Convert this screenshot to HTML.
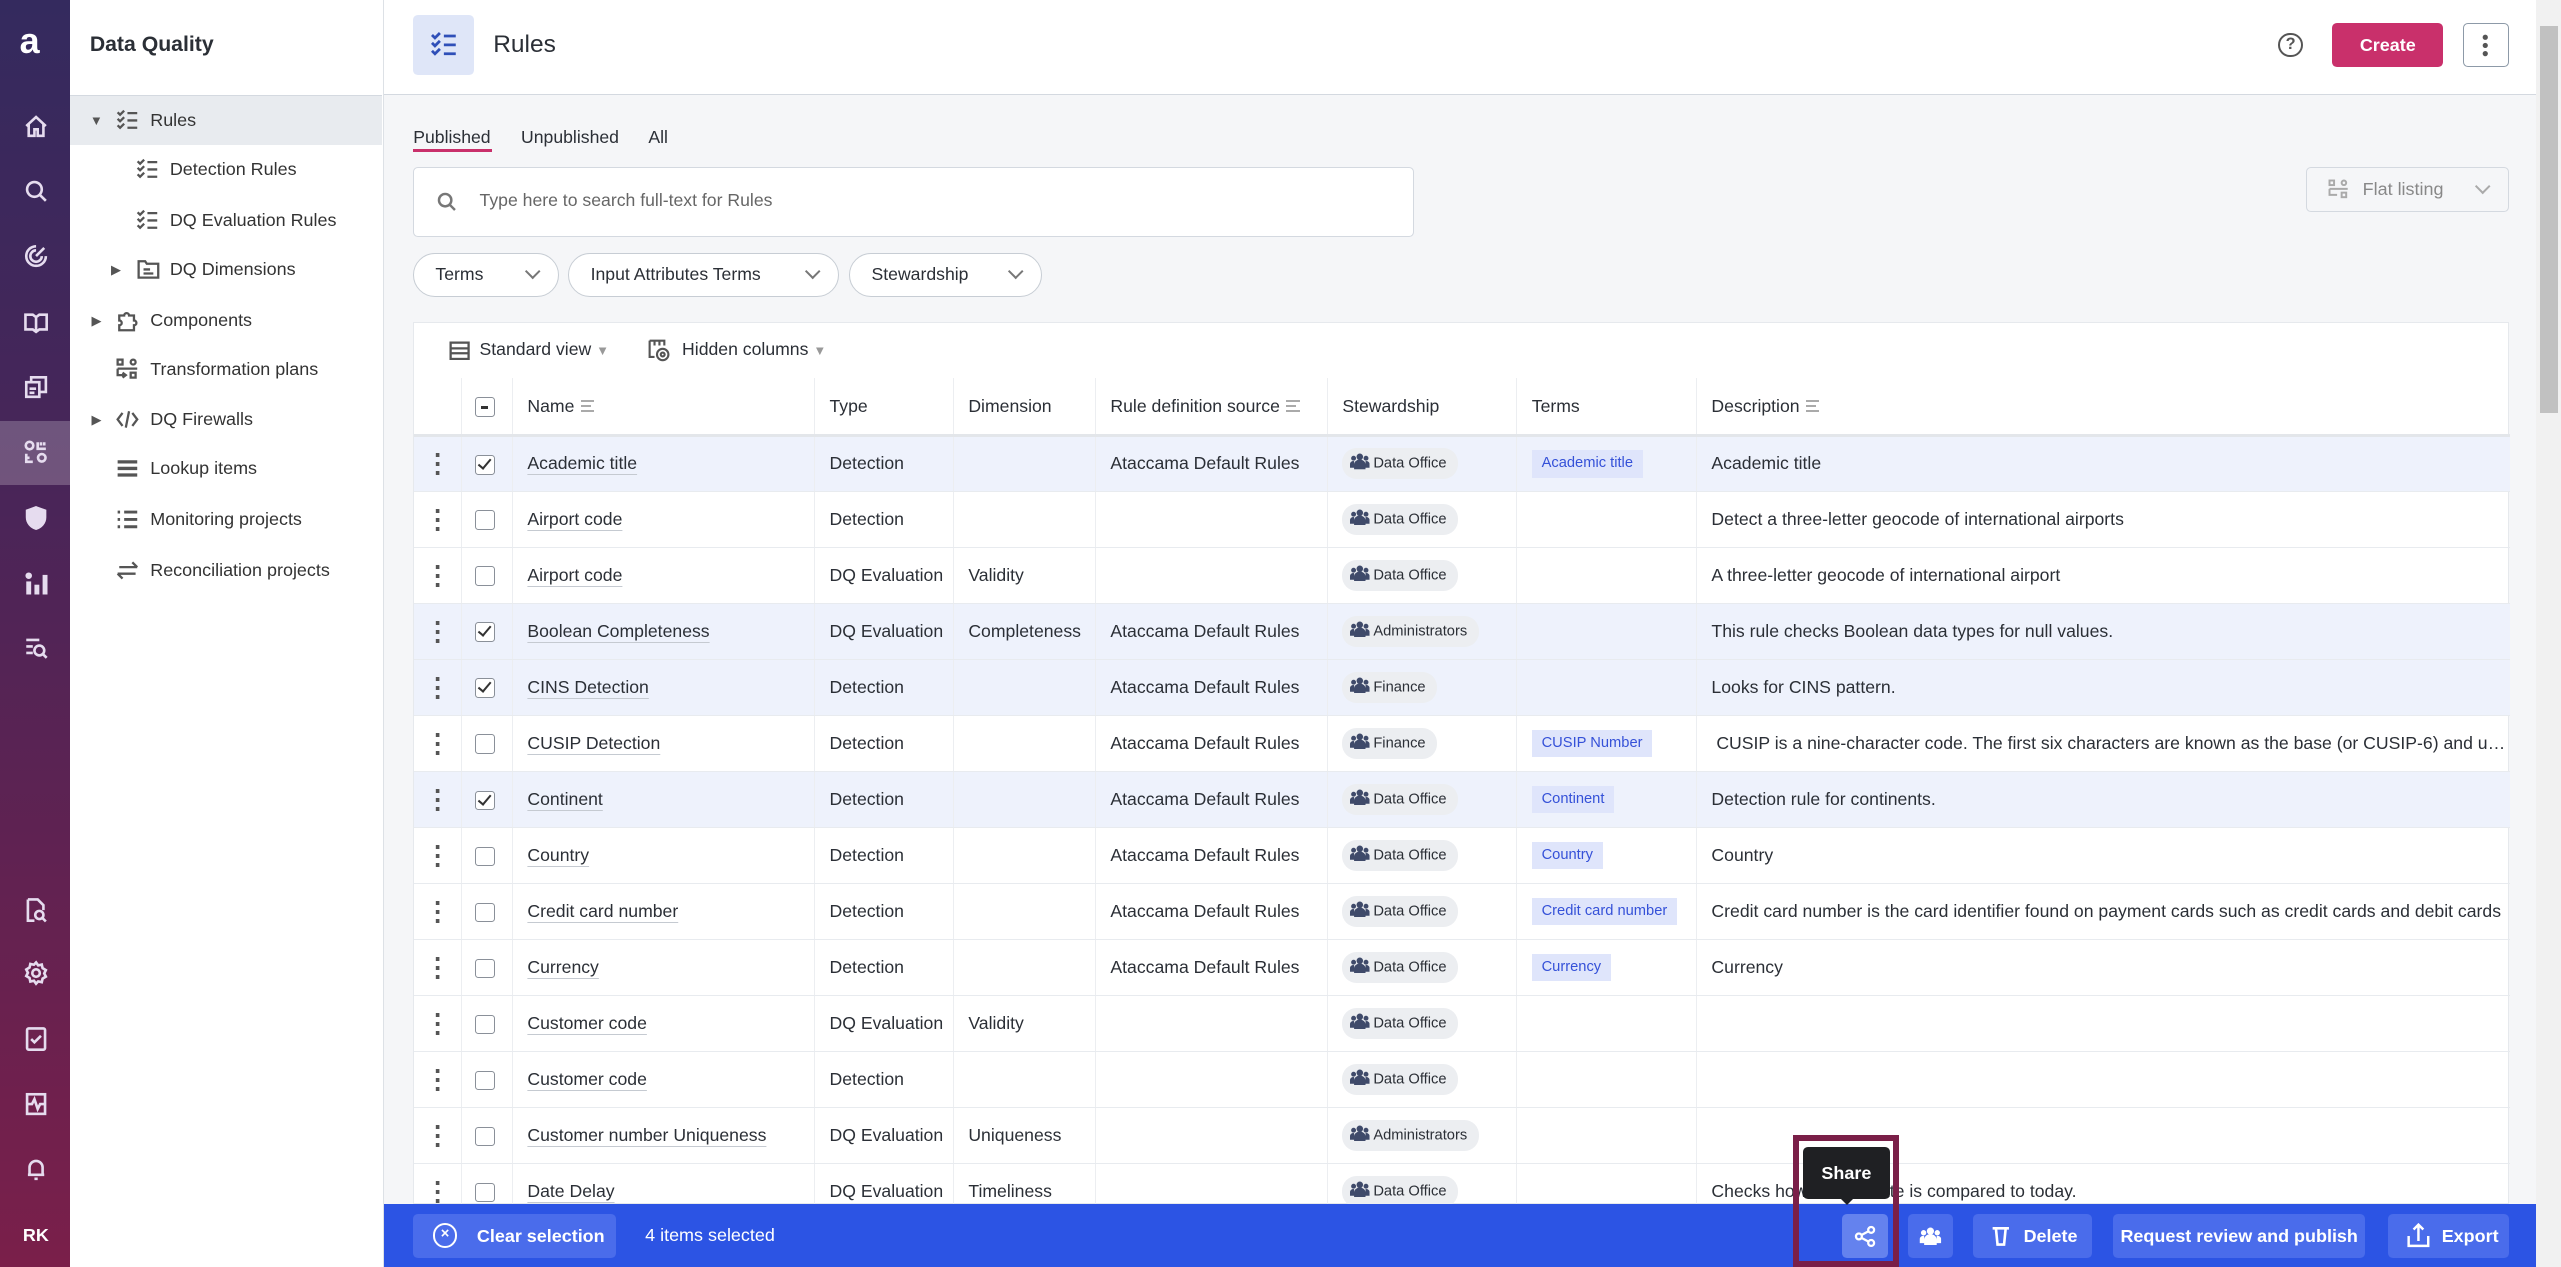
<!DOCTYPE html>
<html><head><meta charset="utf-8"><style>
*{box-sizing:border-box;margin:0;padding:0}
html,body{width:2561px;height:1267px;overflow:hidden;background:#f5f6f8}
#w{zoom:1.63325;width:1568px;height:776px;position:relative;font-family:"Liberation Sans",sans-serif;color:#2b2f36;font-size:10.8px}
.a{position:absolute;white-space:nowrap}
.rail{left:0;top:0;width:43px;height:776px;background:linear-gradient(#342a5e,#4a2558 40%,#7a1f4a)}
.rail svg{position:absolute;left:14px;width:16px;height:16px;fill:none;stroke:#e6dcef;stroke-width:1.6}
.side{left:43px;top:0;width:192px;height:776px;background:#fff;border-right:1px solid #dde1e6}
.nav{position:absolute;left:0;width:191px;height:30px;line-height:30px;font-size:11px;color:#333}
.nav svg{position:absolute;top:8px;width:14px;height:14px;fill:none;stroke:#555;stroke-width:1.4}
.tri{position:absolute;top:0;font-size:8px;color:#555}
.hdr{left:235px;top:0;width:1318px;height:58px;background:#fff;border-bottom:1px solid #d4d9e0}
.chip{position:absolute;top:155px;height:27px;border:1px solid #c7cdd4;border-radius:14px;background:#fff;line-height:25px;padding-left:13px;font-size:10.8px}
.chip i{position:absolute;right:12px;top:7px;width:7px;height:7px;border-right:1.4px solid #777;border-bottom:1.4px solid #777;transform:rotate(45deg)}
.card{left:253px;top:197px;width:1283px;height:540px;background:#fff;border:1px solid #e6e9ed}
table{position:absolute;left:0;top:34px;border-collapse:collapse;table-layout:fixed;width:1283px}
td,th{height:34.3px;border-bottom:1px solid #e8ebef;border-left:1px solid #eceef1;padding-left:9px;text-align:left;white-space:nowrap;overflow:hidden;text-overflow:ellipsis;font-size:10.8px;font-weight:normal}
th{border-bottom:2px solid #e3e6ea;height:35px}
td:first-child,th:first-child{border-left:none}
tr.s td{background:#eef2fc}
.k{padding-left:0;text-align:center;font-weight:bold;font-size:16px;color:#555}
.cb{display:inline-block;width:12px;height:12px;border:1px solid #8a9099;border-radius:2px;vertical-align:middle;position:relative;background:#fff}
.cb.c::after{content:"";position:absolute;left:3px;top:0px;width:3px;height:7px;border-right:1.3px solid #333;border-bottom:1.3px solid #333;transform:rotate(40deg)}
.cb.m::after{content:"";position:absolute;left:3px;top:5px;width:4px;height:1.5px;background:#333}
.n{text-decoration:underline;text-decoration-color:#c5cad1;text-underline-offset:3px}
.st{display:inline-block;background:#eceef1;border-radius:9px;padding:3px 7px 3px 5px;font-size:9px;line-height:12px}
.st svg{width:12px;height:10px;vertical-align:-1px;margin-right:2px;fill:#3f4a6a}
.tm{display:inline-block;background:#dfe5fb;color:#3551d8;font-size:9px;padding:3px 6px;line-height:11px}
.bar{left:235px;top:737px;width:1318px;height:39px;background:#2c54e4}
.bb{position:absolute;top:6px;height:27px;background:#4a6ceb;border-radius:3px;color:#fff;font-weight:bold;font-size:11px;line-height:27px;white-space:nowrap}
.srt{display:inline-block;width:8px;height:7px;margin-left:4px;border-top:1.5px solid #aaa;border-bottom:1.5px solid #aaa;position:relative;vertical-align:0}
.srt::after{content:"";position:absolute;left:0;top:1.5px;width:6px;border-top:1.5px solid #aaa}
</style></head><body><div id="w">
<svg width="0" height="0" style="position:absolute"><defs><symbol id="pp" viewBox="0 0 12 10"><circle cx="6" cy="2.3" r="2"/><circle cx="2.2" cy="3.2" r="1.5"/><circle cx="9.8" cy="3.2" r="1.5"/><path d="M2.5 10V7a3.5 3 0 0 1 7 0v3zM0 9V6.5a2 2 0 0 1 2.5-1.5V9zM12 9V6.5a2 2 0 0 0-2.5-1.5V9z"/></symbol></defs></svg>
<div class="a rail">
<div class="a" style="left:12px;top:14px;color:#fff;font-weight:bold;font-size:22px;line-height:22px">a</div>
<svg style="top:69px" viewBox="0 0 16 16"><path d="M2 8L8 2.5 14 8M3.5 7v7h3.5v-4h2v4h3.5V7"/></svg>
<svg style="top:109px" viewBox="0 0 16 16"><circle cx="7" cy="7" r="4.5"/><path d="M10.5 10.5L14 14"/></svg>
<svg style="top:149px" viewBox="0 0 16 16"><path d="M14 8A6 6 0 1 1 8 2M11.5 8A3.5 3.5 0 1 1 8 4.5M8 8l5-5"/></svg>
<svg style="top:189px" viewBox="0 0 16 16"><path d="M1.5 3.5h4.5L8 5l2-1.5h4.5v9H10L8 14l-2-1.5H1.5zM8 5v9"/></svg>
<svg style="top:229px" viewBox="0 0 16 16"><path d="M2 5h8v9H2zM5 5V2h9v9h-4M4 9h4M4 11.5h3"/></svg>
<div class="a" style="left:0;top:258px;width:43px;height:39px;background:rgba(255,255,255,.22)"></div>
<svg style="top:269px" viewBox="0 0 16 16"><circle cx="4" cy="4" r="2.3"/><circle cx="11.5" cy="11.5" r="2.3"/><path d="M9 2v4h5M11 2v2M13 2v2M2 9v5h4M2 11.5h2"/></svg>
<svg style="top:309px;fill:#e6dcef" viewBox="0 0 16 16"><path d="M8 1.5l5.5 2v4c0 3.5-2.5 6-5.5 7-3-1-5.5-3.5-5.5-7v-4z"/></svg>
<svg style="top:349px;fill:#e6dcef;stroke:none" viewBox="0 0 16 16"><circle cx="3.5" cy="3.5" r="2"/><rect x="2" y="7" width="3" height="8"/><rect x="7" y="9" width="3" height="6"/><rect x="12" y="3" width="3" height="12"/></svg>
<svg style="top:389px" viewBox="0 0 16 16"><path d="M2 3h8M2 7h4M2 11h4"/><circle cx="10" cy="9.5" r="3"/><path d="M12 11.5l2.5 2.5"/></svg>
<svg style="top:549px" viewBox="0 0 16 16"><path d="M3 1.5h6l3.5 3.5v3M3 1.5v13h4"/><circle cx="10" cy="11" r="2.5"/><path d="M12 13l2 2"/></svg>
<svg style="top:588px" viewBox="0 0 16 16"><circle cx="8" cy="8" r="2.3"/><path d="M8 1.5l1.3 1.8 2.2-.5.5 2.2 2 1.2-1 2 1 2-2 1.2-.5 2.2-2.2-.5L8 14.5l-1.3-1.8-2.2.5-.5-2.2-2-1.2 1-2-1-2 2-1.2.5-2.2 2.2.5z"/></svg>
<svg style="top:628px" viewBox="0 0 16 16"><rect x="2.5" y="1.5" width="11" height="13" rx="1"/><path d="M5 8l2 2 4-4"/></svg>
<svg style="top:668px" viewBox="0 0 16 16"><rect x="2.5" y="2" width="11" height="12"/><path d="M2.5 8h3l1.5-3 2 6 1.5-3h3"/></svg>
<svg style="top:708px" viewBox="0 0 16 16"><path d="M4 11.5V7a4 4 0 0 1 8 0v4.5zM3 11.5h10M7 14h2"/></svg>
<div class="a" style="left:14px;top:750px;color:#fff;font-weight:bold;font-size:11px">RK</div>
</div>
<div class="a side">
<div class="a" style="left:12px;top:20px;font-size:13px;font-weight:bold;color:#2b2f36">Data Quality</div>
<div class="a" style="left:0;top:58px;width:191px;border-top:1px solid #d4d9e0"></div>
<div class="nav" style="top:59px;background:#e8ebef"><span class="tri" style="left:12px">▼</span><svg style="left:28px" viewBox="0 0 14 14"><path d="M1 2l1.5 1.5L5 1M1 6l1.5 1.5L5 5M1 10l1.5 1.5L5 9M7 2.5h6M7 7h6M7 11.5h6"/></svg><span style="position:absolute;left:49px">Rules</span></div>
<div class="nav" style="top:89px"><svg style="left:40px" viewBox="0 0 14 14"><path d="M1 2l1.5 1.5L5 1M1 6l1.5 1.5L5 5M1 10l1.5 1.5L5 9M7 2.5h6M7 7h6M7 11.5h6"/></svg><span style="position:absolute;left:61px">Detection Rules</span></div>
<div class="nav" style="top:120px"><svg style="left:40px" viewBox="0 0 14 14"><path d="M1 2l1.5 1.5L5 1M1 6l1.5 1.5L5 5M1 10l1.5 1.5L5 9M7 2.5h6M7 7h6M7 11.5h6"/></svg><span style="position:absolute;left:61px">DQ Evaluation Rules</span></div>
<div class="nav" style="top:150px"><span class="tri" style="left:25px">▶</span><svg style="left:41px" viewBox="0 0 14 14"><path d="M1 2h4l1 1.5h7V12H1zM4 7h4M4 9.5h6"/></svg><span style="position:absolute;left:61px">DQ Dimensions</span></div>
<div class="nav" style="top:181px"><span class="tri" style="left:13px">▶</span><svg style="left:28px" viewBox="0 0 14 14"><path d="M2 4h3a1.5 1.5 0 0 1 3 0h3v3a1.5 1.5 0 0 1 0 3v3H2v-3a1.5 1.5 0 0 0 0-3z"/></svg><span style="position:absolute;left:49px">Components</span></div>
<div class="nav" style="top:211px"><svg style="left:28px" viewBox="0 0 14 14"><rect x="1" y="1" width="3" height="3"/><rect x="9" y="1" width="3" height="3" rx="1.5"/><rect x="9" y="9" width="3" height="3"/><path d="M1 6.5h12M1 6.5v4h5M4 9l2 1.5-2 1.5"/></svg><span style="position:absolute;left:49px">Transformation plans</span></div>
<div class="nav" style="top:242px"><span class="tri" style="left:13px">▶</span><svg style="left:28px" viewBox="0 0 14 14"><path d="M4 3L1 7l3 4M10 3l3 4-3 4M8 2L6 12"/></svg><span style="position:absolute;left:49px">DQ Firewalls</span></div>
<div class="nav" style="top:272px"><svg style="left:28px;stroke-width:2" viewBox="0 0 14 14"><path d="M1 3h12M1 7h12M1 11h12"/></svg><span style="position:absolute;left:49px">Lookup items</span></div>
<div class="nav" style="top:303px"><svg style="left:28px;stroke-width:1.8" viewBox="0 0 14 14"><path d="M1 2.5h1.5M1 7h1.5M1 11.5h1.5M5 2.5h8M5 7h8M5 11.5h8"/></svg><span style="position:absolute;left:49px">Monitoring projects</span></div>
<div class="nav" style="top:334px"><svg style="left:28px" viewBox="0 0 14 14"><path d="M2 5h11M10 2l3 3M12 9H1M4 12L1 9"/></svg><span style="position:absolute;left:49px">Reconciliation projects</span></div>
</div>
<div class="a hdr">
<div class="a" style="left:18px;top:9px;width:37px;height:37px;background:#dfe6f8;border-radius:3px"><svg style="position:absolute;left:10px;top:10px;width:17px;height:17px;fill:none;stroke:#2f4fb8;stroke-width:1.4" viewBox="0 0 14 14"><path d="M1 2l1.5 1.5L5 1M1 6l1.5 1.5L5 5M1 10l1.5 1.5L5 9M7 2.5h6M7 7h6M7 11.5h6"/></svg></div>
<div class="a" style="left:67px;top:19px;font-size:15px;color:#2b2f36">Rules</div>
<div class="a" style="left:1160px;top:20px;width:15px;height:15px;border:1.8px solid #555;border-radius:50%;font-size:10px;font-weight:bold;text-align:center;line-height:12px;color:#555">?</div>
<div class="a" style="left:1193px;top:14px;width:68px;height:27px;background:#c9306b;border-radius:3px;color:#fff;font-weight:bold;text-align:center;line-height:27px;font-size:11px">Create</div>
<div class="a" style="left:1273px;top:14px;width:28px;height:27px;border:1px solid #8d9aa8;border-radius:3px"><svg style="position:absolute;left:11px;top:6px;width:4px;height:14px;fill:#555" viewBox="0 0 4 14"><circle cx="2" cy="2" r="1.6"/><circle cx="2" cy="7" r="1.6"/><circle cx="2" cy="12" r="1.6"/></svg></div>
</div>
<div class="a" style="left:1553px;top:0;width:15px;height:776px;background:#f1f1f1"><div class="a" style="left:2px;top:16px;width:11px;height:237px;background:#c1c1c1"></div></div>
<div class="a" style="left:253px;top:78px">Published</div>
<div class="a" style="left:253px;top:91px;width:48px;height:2px;background:#c9306b"></div>
<div class="a" style="left:319px;top:78px">Unpublished</div>
<div class="a" style="left:397px;top:78px">All</div>
<div class="a" style="left:253px;top:102px;width:613px;height:43px;background:#fff;border:1px solid #d4d9e0;border-radius:3px">
<svg style="position:absolute;left:14px;top:15px;width:12px;height:12px;fill:none;stroke:#777;stroke-width:1.5" viewBox="0 0 12 12"><circle cx="5" cy="5" r="3.8"/><path d="M8 8l3 3"/></svg>
<span style="position:absolute;left:40px;top:14px;color:#666">Type here to search full-text for Rules</span></div>
<div class="a" style="left:1412px;top:102px;width:124px;height:28px;border:1px solid #d4d9e0;border-radius:3px;color:#888;line-height:26px;padding-left:34px;font-size:11px">Flat listing<i style="position:absolute;right:12px;top:8px;width:7px;height:7px;border-right:1.4px solid #aaa;border-bottom:1.4px solid #aaa;transform:rotate(45deg)"></i><svg style="position:absolute;left:13px;top:7px;width:13px;height:13px;fill:none;stroke:#aaa;stroke-width:1.3" viewBox="0 0 14 14"><rect x="1" y="1" width="3" height="3"/><rect x="9" y="1" width="3" height="3" rx="1.5"/><rect x="9" y="9" width="3" height="3"/><path d="M1 6.5h12M1 6.5v4h5"/></svg></div>
<div class="chip" style="left:253px;width:89px">Terms<i></i></div>
<div class="chip" style="left:348px;width:166px">Input Attributes Terms<i></i></div>
<div class="chip" style="left:520px;width:118px">Stewardship<i></i></div>
<div class="a card">
<svg style="position:absolute;left:21px;top:11px;width:13px;height:12px;fill:none;stroke:#555;stroke-width:1.4" viewBox="0 0 13 12"><rect x="1" y="1" width="11" height="10"/><path d="M1 4.5h11M1 7.5h11"/></svg>
<span style="position:absolute;left:40px;top:10px">Standard view <span style="color:#999;font-size:8px">▼</span></span>
<svg style="position:absolute;left:143px;top:10px;width:14px;height:14px;fill:none;stroke:#555;stroke-width:1.3" viewBox="0 0 14 14"><path d="M1 1h9v3M1 1v10h3M4 1v3M7 1v3"/><circle cx="9" cy="9.5" r="3.5"/><circle cx="9" cy="9.5" r="1.2"/></svg>
<span style="position:absolute;left:164px;top:10px">Hidden columns <span style="color:#999;font-size:8px">▼</span></span>
<table>
<colgroup><col style="width:29px"><col style="width:31px"><col style="width:185px"><col style="width:85px"><col style="width:87px"><col style="width:142px"><col style="width:116px"><col style="width:110px"><col></colgroup>
<tr><th></th><th style="padding-left:8px"><span class="cb m"></span></th><th>Name<span class="srt"></span></th><th>Type</th><th>Dimension</th><th>Rule definition source<span class="srt"></span></th><th>Stewardship</th><th>Terms</th><th>Description<span class="srt"></span></th></tr>
<tr class="s"><td class="k">⋮</td><td style="padding-left:8px"><span class="cb c"></span></td><td><span class="n">Academic title</span></td><td>Detection</td><td></td><td>Ataccama Default Rules</td><td><span class="st"><svg><use href="#pp"/></svg>Data Office</span></td><td><span class="tm">Academic title</span></td><td>Academic title</td></tr>
<tr><td class="k">⋮</td><td style="padding-left:8px"><span class="cb"></span></td><td><span class="n">Airport code</span></td><td>Detection</td><td></td><td></td><td><span class="st"><svg><use href="#pp"/></svg>Data Office</span></td><td></td><td>Detect a three-letter geocode of international airports</td></tr>
<tr><td class="k">⋮</td><td style="padding-left:8px"><span class="cb"></span></td><td><span class="n">Airport code</span></td><td>DQ Evaluation</td><td>Validity</td><td></td><td><span class="st"><svg><use href="#pp"/></svg>Data Office</span></td><td></td><td>A three-letter geocode of international airport</td></tr>
<tr class="s"><td class="k">⋮</td><td style="padding-left:8px"><span class="cb c"></span></td><td><span class="n">Boolean Completeness</span></td><td>DQ Evaluation</td><td>Completeness</td><td>Ataccama Default Rules</td><td><span class="st"><svg><use href="#pp"/></svg>Administrators</span></td><td></td><td>This rule checks Boolean data types for null values.</td></tr>
<tr class="s"><td class="k">⋮</td><td style="padding-left:8px"><span class="cb c"></span></td><td><span class="n">CINS Detection</span></td><td>Detection</td><td></td><td>Ataccama Default Rules</td><td><span class="st"><svg><use href="#pp"/></svg>Finance</span></td><td></td><td>Looks for CINS pattern.</td></tr>
<tr><td class="k">⋮</td><td style="padding-left:8px"><span class="cb"></span></td><td><span class="n">CUSIP Detection</span></td><td>Detection</td><td></td><td>Ataccama Default Rules</td><td><span class="st"><svg><use href="#pp"/></svg>Finance</span></td><td><span class="tm">CUSIP Number</span></td><td>&nbsp;CUSIP is a nine-character code. The first six characters are known as the base (or CUSIP-6) and unique</td></tr>
<tr class="s"><td class="k">⋮</td><td style="padding-left:8px"><span class="cb c"></span></td><td><span class="n">Continent</span></td><td>Detection</td><td></td><td>Ataccama Default Rules</td><td><span class="st"><svg><use href="#pp"/></svg>Data Office</span></td><td><span class="tm">Continent</span></td><td>Detection rule for continents.</td></tr>
<tr><td class="k">⋮</td><td style="padding-left:8px"><span class="cb"></span></td><td><span class="n">Country</span></td><td>Detection</td><td></td><td>Ataccama Default Rules</td><td><span class="st"><svg><use href="#pp"/></svg>Data Office</span></td><td><span class="tm">Country</span></td><td>Country</td></tr>
<tr><td class="k">⋮</td><td style="padding-left:8px"><span class="cb"></span></td><td><span class="n">Credit card number</span></td><td>Detection</td><td></td><td>Ataccama Default Rules</td><td><span class="st"><svg><use href="#pp"/></svg>Data Office</span></td><td><span class="tm">Credit card number</span></td><td>Credit card number is the card identifier found on payment cards such as credit cards and debit cards</td></tr>
<tr><td class="k">⋮</td><td style="padding-left:8px"><span class="cb"></span></td><td><span class="n">Currency</span></td><td>Detection</td><td></td><td>Ataccama Default Rules</td><td><span class="st"><svg><use href="#pp"/></svg>Data Office</span></td><td><span class="tm">Currency</span></td><td>Currency</td></tr>
<tr><td class="k">⋮</td><td style="padding-left:8px"><span class="cb"></span></td><td><span class="n">Customer code</span></td><td>DQ Evaluation</td><td>Validity</td><td></td><td><span class="st"><svg><use href="#pp"/></svg>Data Office</span></td><td></td><td></td></tr>
<tr><td class="k">⋮</td><td style="padding-left:8px"><span class="cb"></span></td><td><span class="n">Customer code</span></td><td>Detection</td><td></td><td></td><td><span class="st"><svg><use href="#pp"/></svg>Data Office</span></td><td></td><td></td></tr>
<tr><td class="k">⋮</td><td style="padding-left:8px"><span class="cb"></span></td><td><span class="n">Customer number Uniqueness</span></td><td>DQ Evaluation</td><td>Uniqueness</td><td></td><td><span class="st"><svg><use href="#pp"/></svg>Administrators</span></td><td></td><td></td></tr>
<tr><td class="k">⋮</td><td style="padding-left:8px"><span class="cb"></span></td><td><span class="n">Date Delay</span></td><td>DQ Evaluation</td><td>Timeliness</td><td></td><td><span class="st"><svg><use href="#pp"/></svg>Data Office</span></td><td></td><td>Checks how old the date is compared to today.</td></tr>
</table>
</div>
<div class="a bar">
<div class="bb" style="left:18px;width:124px;padding-left:39px"><span style="position:absolute;left:12px;top:6px;width:15px;height:15px;border:1.6px solid #fff;border-radius:50%;font-size:9px;line-height:12px;text-align:center">×</span>Clear selection</div>
<div class="a" style="left:160px;top:13px;color:#fff;font-size:11px">4 items selected</div>
<div class="bb" style="left:893px;width:28px;background:#6482ee"><svg style="position:absolute;left:7px;top:7px;width:14px;height:14px;fill:none;stroke:#fff;stroke-width:1.4" viewBox="0 0 14 14"><circle cx="3" cy="7" r="1.8"/><circle cx="10.5" cy="3" r="1.8"/><circle cx="10.5" cy="11" r="1.8"/><path d="M4.6 6.1l4.3-2.3M4.6 7.9l4.3 2.3"/></svg></div>
<div class="bb" style="left:933px;width:28px"><svg style="position:absolute;left:7px;top:8px;width:14px;height:11px;fill:#fff" viewBox="0 0 12 10"><use href="#pp"/></svg></div>
<div class="bb" style="left:973px;width:73px;padding-left:31px"><svg style="position:absolute;left:11px;top:7px;width:12px;height:13px;fill:none;stroke:#fff;stroke-width:1.6" viewBox="0 0 12 13"><path d="M1 2h10M3 2l1 10h4l1-10"/></svg>Delete</div>
<div class="bb" style="left:1059px;width:154px;text-align:center">Request review and publish</div>
<div class="bb" style="left:1227px;width:74px;padding-left:33px"><svg style="position:absolute;left:12px;top:6px;width:14px;height:15px;fill:none;stroke:#fff;stroke-width:1.5" viewBox="0 0 14 15"><path d="M1 8v6h12V8M7 11V1M4 4l3-3 3 3"/></svg>Export</div>
</div>
<div class="a" style="left:1104px;top:702px;width:53px;height:32px;background:#1f2023;border-radius:3px;color:#fff;font-weight:bold;font-size:11px;text-align:center;line-height:32px">Share</div>
<div class="a" style="left:1126px;top:733px;width:0;height:0;border-left:5px solid transparent;border-right:5px solid transparent;border-top:5px solid #1f2023"></div>
<div class="a" style="left:1098px;top:695px;width:65px;height:81px;border:4px solid #7a1f48"></div>
</div></body></html>
